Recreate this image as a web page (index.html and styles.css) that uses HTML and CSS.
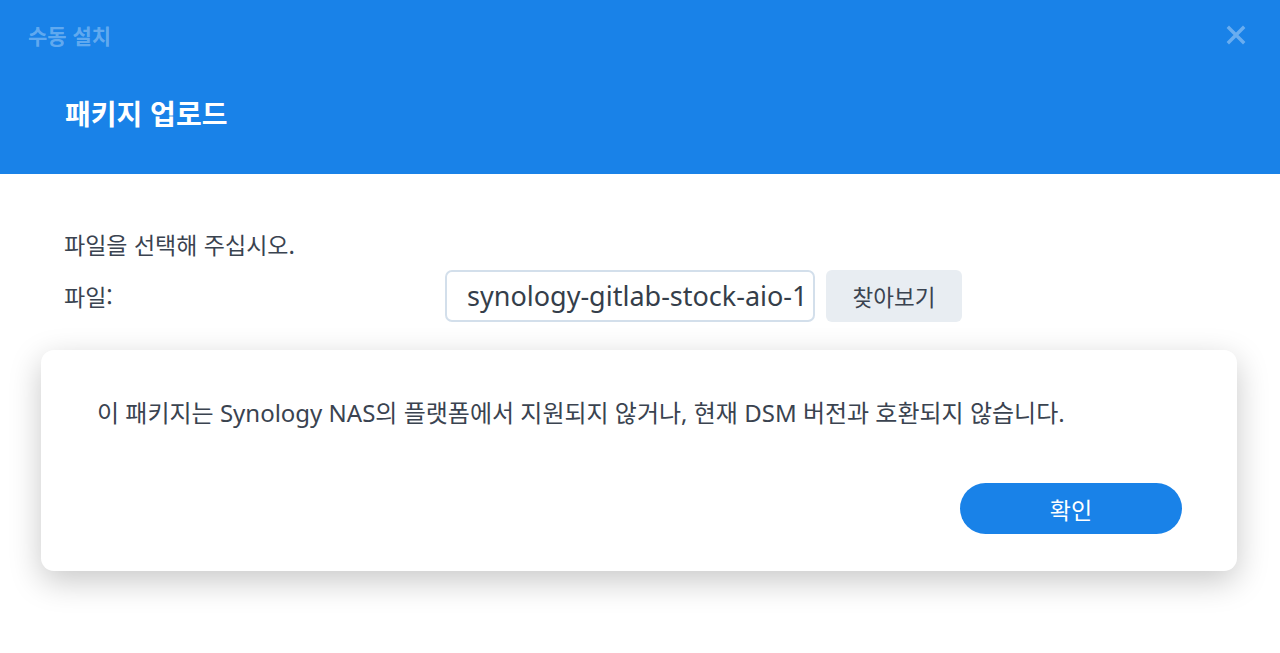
FILE: index.html
```html
<!DOCTYPE html>
<html lang="ko">
<head>
<meta charset="utf-8">
<link rel="stylesheet" href="styles.css">
</head>
<body>
<div class="page">
  <header class="header">
    <div class="topbar">
      <span class="wintitle">수동 설치</span>
      <span class="close" aria-label="close">
        <svg width="20" height="20" viewBox="0 0 20 20"><path d="M3 3 L17 17 M17 3 L3 17" stroke="currentColor" stroke-width="3.4" stroke-linecap="square"/></svg>
      </span>
    </div>
    <h1 class="title">패키지 업로드</h1>
  </header>
  <main class="body">
    <p class="prompt">파일을 선택해 주십시오.</p>
    <div class="row">
      <span class="label">파일:</span>
      <div class="field">
        <div class="input">synology-gitlab-stock-aio-1</div>
        <button class="browse">찾아보기</button>
      </div>
    </div>
  </main>
  <div class="modal">
    <p class="msg">이 패키지는 Synology NAS의 플랫폼에서 지원되지 않거나, 현재 DSM 버전과 호환되지 않습니다.</p>
    <div class="actions"><button class="ok">확인</button></div>
  </div>
</div>
</body>
</html>
```
FILE: styles.css
```css
* { box-sizing: border-box; }
html, body { margin: 0; padding: 0; background: #fff; }
body {
  width: 1280px; height: 653px; overflow: hidden;
  font-family: "Noto Sans", "Noto Sans CJK KR", sans-serif;
  color: #3a4350;
}
.page { position: relative; width: 1280px; height: 653px; }
.header {
  background: #1982e8;
  height: 174px;
  padding: 0 28px 0 28px;
}
.topbar {
  height: 70px;
  display: flex; align-items: center; justify-content: space-between;
}
.wintitle {
  color: rgba(255,255,255,0.32);
  font-size: 21px; font-weight: 700;
  font-family: "Noto Sans CJK KR", sans-serif;
}
.close { color: rgba(255,255,255,0.35); display: flex; margin-right: 6px; }
.title {
  margin: 22px 0 0 37px;
  color: #fff; font-size: 28px; font-weight: 700; line-height: 42px;
  font-family: "Noto Sans CJK KR", sans-serif;
}
.body { padding: 50px 64px 0 64px; }
.prompt {
  margin: 0; font-size: 23px; line-height: 40px;
  font-family: "Noto Sans CJK KR", sans-serif;
}
.row { display: flex; align-items: center; margin-top: 6px; }
.label { width: 381px; font-size: 23px; font-family: "Noto Sans CJK KR", sans-serif; }
.field { display: flex; gap: 11px; }
.input {
  width: 370px; height: 52px;
  border: 2px solid #d3dfeb; border-radius: 7px;
  padding: 0 0 0 20px;
  font-size: 27px; line-height: 47px;
  white-space: nowrap; overflow: hidden;
  color: #353e4a;
}
.browse {
  width: 136px; height: 52px; border: 0; border-radius: 6px;
  background: #e8edf2; color: #3a4350;
  font-family: "Noto Sans CJK KR", sans-serif; font-size: 22.5px;
}
.modal {
  position: absolute; left: 41px; top: 350px;
  width: 1196px; height: 221px;
  background: #fff; border-radius: 13px;
  box-shadow: 0 10px 32px rgba(0,0,0,0.22);
  padding: 0 55px 0 56px;
  display: flex; flex-direction: column;
}
.msg {
  margin: 45px 0 0 0; font-size: 24px; line-height: 36px;
  font-family: "Noto Sans", "Noto Sans CJK KR", sans-serif;
  color: #3a4350;
}
.actions { display: flex; justify-content: flex-end; margin-top: 52px; }
.ok {
  width: 222px; height: 51px; border: 0; border-radius: 26px;
  background: #1982e8; color: #fff;
  font-family: "Noto Sans CJK KR", sans-serif; font-size: 23px;
}
```
